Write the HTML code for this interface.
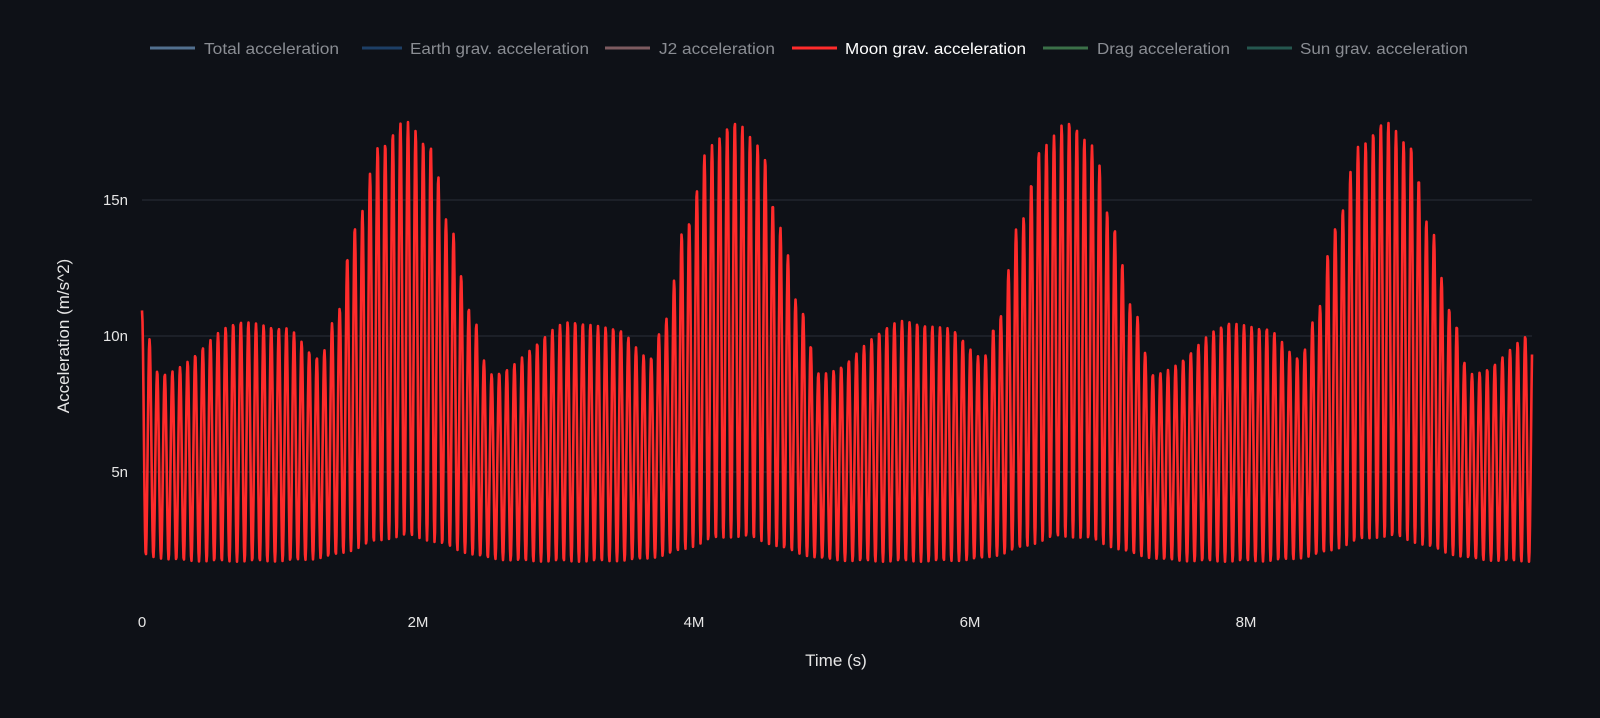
<!DOCTYPE html>
<html><head><meta charset="utf-8"><style>
html,body{margin:0;padding:0;background:#0e1117;}
svg{display:block;font-family:"Liberation Sans",sans-serif;}
</style></head><body>
<svg id="s" width="1600" height="718" viewBox="0 0 1600 718" xmlns="http://www.w3.org/2000/svg">
<rect width="1600" height="718" fill="#0e1117"/>
<g stroke="#2b2f38" stroke-width="1">
<line x1="142" y1="200" x2="1532" y2="200"/>
<line x1="142" y1="336" x2="1532" y2="336"/>
<line x1="142" y1="472" x2="1532" y2="472"/>
</g>
<g font-size="15" fill="#e6e6e6" text-anchor="end">
<text x="128" y="205">15n</text>
<text x="128" y="341">10n</text>
<text x="128" y="477">5n</text>
</g>
<g font-size="15" fill="#e6e6e6" text-anchor="middle">
<text x="142" y="627">0</text>
<text x="418" y="627">2M</text>
<text x="694" y="627">4M</text>
<text x="970" y="627">6M</text>
<text x="1246" y="627">8M</text>
</g>
<text x="836" y="666" font-size="17" fill="#e6e6e6" text-anchor="middle">Time (s)</text>
<text transform="translate(69,336) rotate(-90)" font-size="17" fill="#e6e6e6" text-anchor="middle">Acceleration (m/s^2)</text>
<g stroke-width="3">
<line x1="150" y1="48" x2="195" y2="48" stroke="#52708f"/>
<line x1="362" y1="48" x2="402" y2="48" stroke="#1d3f66"/>
<line x1="605" y1="48" x2="650" y2="48" stroke="#7d5b60"/>
<line x1="792" y1="48" x2="837" y2="48" stroke="#ff2b2b"/>
<line x1="1043" y1="48" x2="1088" y2="48" stroke="#3b7048"/>
<line x1="1247" y1="48" x2="1292" y2="48" stroke="#25574f"/>
</g>
<g font-size="16" fill="#8a8d93">
<text x="204" y="54" textLength="135" lengthAdjust="spacingAndGlyphs">Total acceleration</text>
<text x="410" y="54" textLength="179" lengthAdjust="spacingAndGlyphs">Earth grav. acceleration</text>
<text x="659" y="54" textLength="116" lengthAdjust="spacingAndGlyphs">J2 acceleration</text>
<text x="845" y="54" textLength="181" lengthAdjust="spacingAndGlyphs" fill="#ffffff">Moon grav. acceleration</text>
<text x="1097" y="54" textLength="133" lengthAdjust="spacingAndGlyphs">Drag acceleration</text>
<text x="1300" y="54" textLength="168" lengthAdjust="spacingAndGlyphs">Sun grav. acceleration</text>
</g>
<path id="p" fill="none" stroke="#ff2b2b" stroke-width="2.6" stroke-linejoin="round"/>
</svg>
<script>
(function(){
var centers=[75,405,735,1068,1385,1715];
var kd=[-170,-120,-85,-70,-50,-25,0,25,45,65,85,170];
var kv=[10.55,10.3,9.2,10.6,14,17,17.9,17,14,11,8.6,10.55];
function interp(d){
 if(d<=kd[0])return kv[0];
 for(var i=1;i<kd.length;i++){if(d<=kd[i]){var t=(d-kd[i-1])/(kd[i]-kd[i-1]);t=0.5-0.5*Math.cos(Math.PI*t);return kv[i-1]+(kv[i]-kv[i-1])*t;}}
 return kv[kv.length-1];
}
function yv(v){return 608-v*27.2;}
var P=7.6,pts=[];
for(var x=142;x<=1532;x+=0.5){
 var best=1e9;
 for(var c=0;c<centers.length;c++){var dd=x-centers[c];if(Math.abs(dd)<Math.abs(best)){best=dd;}}
 var d=best;
 var hi=interp(d);
 var lo=1.7+0.9*Math.exp(-(d/60)*(d/60));
 var ph=(x-142)/P*2*Math.PI;
 var s=0.5+0.5*Math.cos(ph);
 var v=lo+(hi-lo)*s;
 pts.push((pts.length?"L":"M")+x.toFixed(1)+" "+yv(v).toFixed(1));
}
document.getElementById('p').setAttribute('d',pts.join(''));
})();
</script>
</body></html>
